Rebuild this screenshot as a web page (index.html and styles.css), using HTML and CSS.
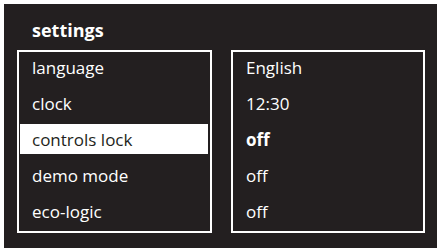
FILE: index.html
```html
<!DOCTYPE html>
<html>
<head>
<meta charset="utf-8">
<link rel="stylesheet" href="styles.css">
</head>
<body>
<div class="screen">
  <div class="title">settings</div>
  <div class="panels">
    <ul class="box labels">
      <li class="row">language</li>
      <li class="row">clock</li>
      <li class="row selected">controls lock</li>
      <li class="row">demo mode</li>
      <li class="row">eco-logic</li>
    </ul>
    <ul class="box values">
      <li class="row">English</li>
      <li class="row">12:30</li>
      <li class="row current">off</li>
      <li class="row">off</li>
      <li class="row">off</li>
    </ul>
  </div>
</div>
</body>
</html>
```
FILE: styles.css
```css
html, body {
  margin: 0;
  padding: 0;
  background: #ffffff;
}
.screen {
  margin: 4px 0 0 4px;
  width: 433px;
  height: 244px;
  background: #231f20;
  color: #ffffff;
  font-family: "Open Sans", "Liberation Sans", sans-serif;
  overflow: hidden;
}
.title {
  padding: 14px 0 0 28px;
  font-size: 18px;
  font-weight: 700;
  line-height: 24px;
  height: 24px;
  margin-bottom: 8px;
}
.panels {
  display: flex;
  gap: 19px;
  padding-left: 13px;
}
.box {
  list-style: none;
  margin: 0;
  border: 2px solid #ffffff;
  padding: 0 2px 5px 1px;
  display: flex;
  flex-direction: column;
  gap: 6px;
}
.labels { width: 188px; }
.values { width: 187px; }
.row {
  height: 30px;
  box-sizing: border-box;
  padding: 1px 0 0 12px;
  font-size: 17px;
  line-height: 29px;
  white-space: nowrap;
}
.selected {
  background: #ffffff;
  color: #231f20;
}
.current {
  font-weight: 700;
}
```
